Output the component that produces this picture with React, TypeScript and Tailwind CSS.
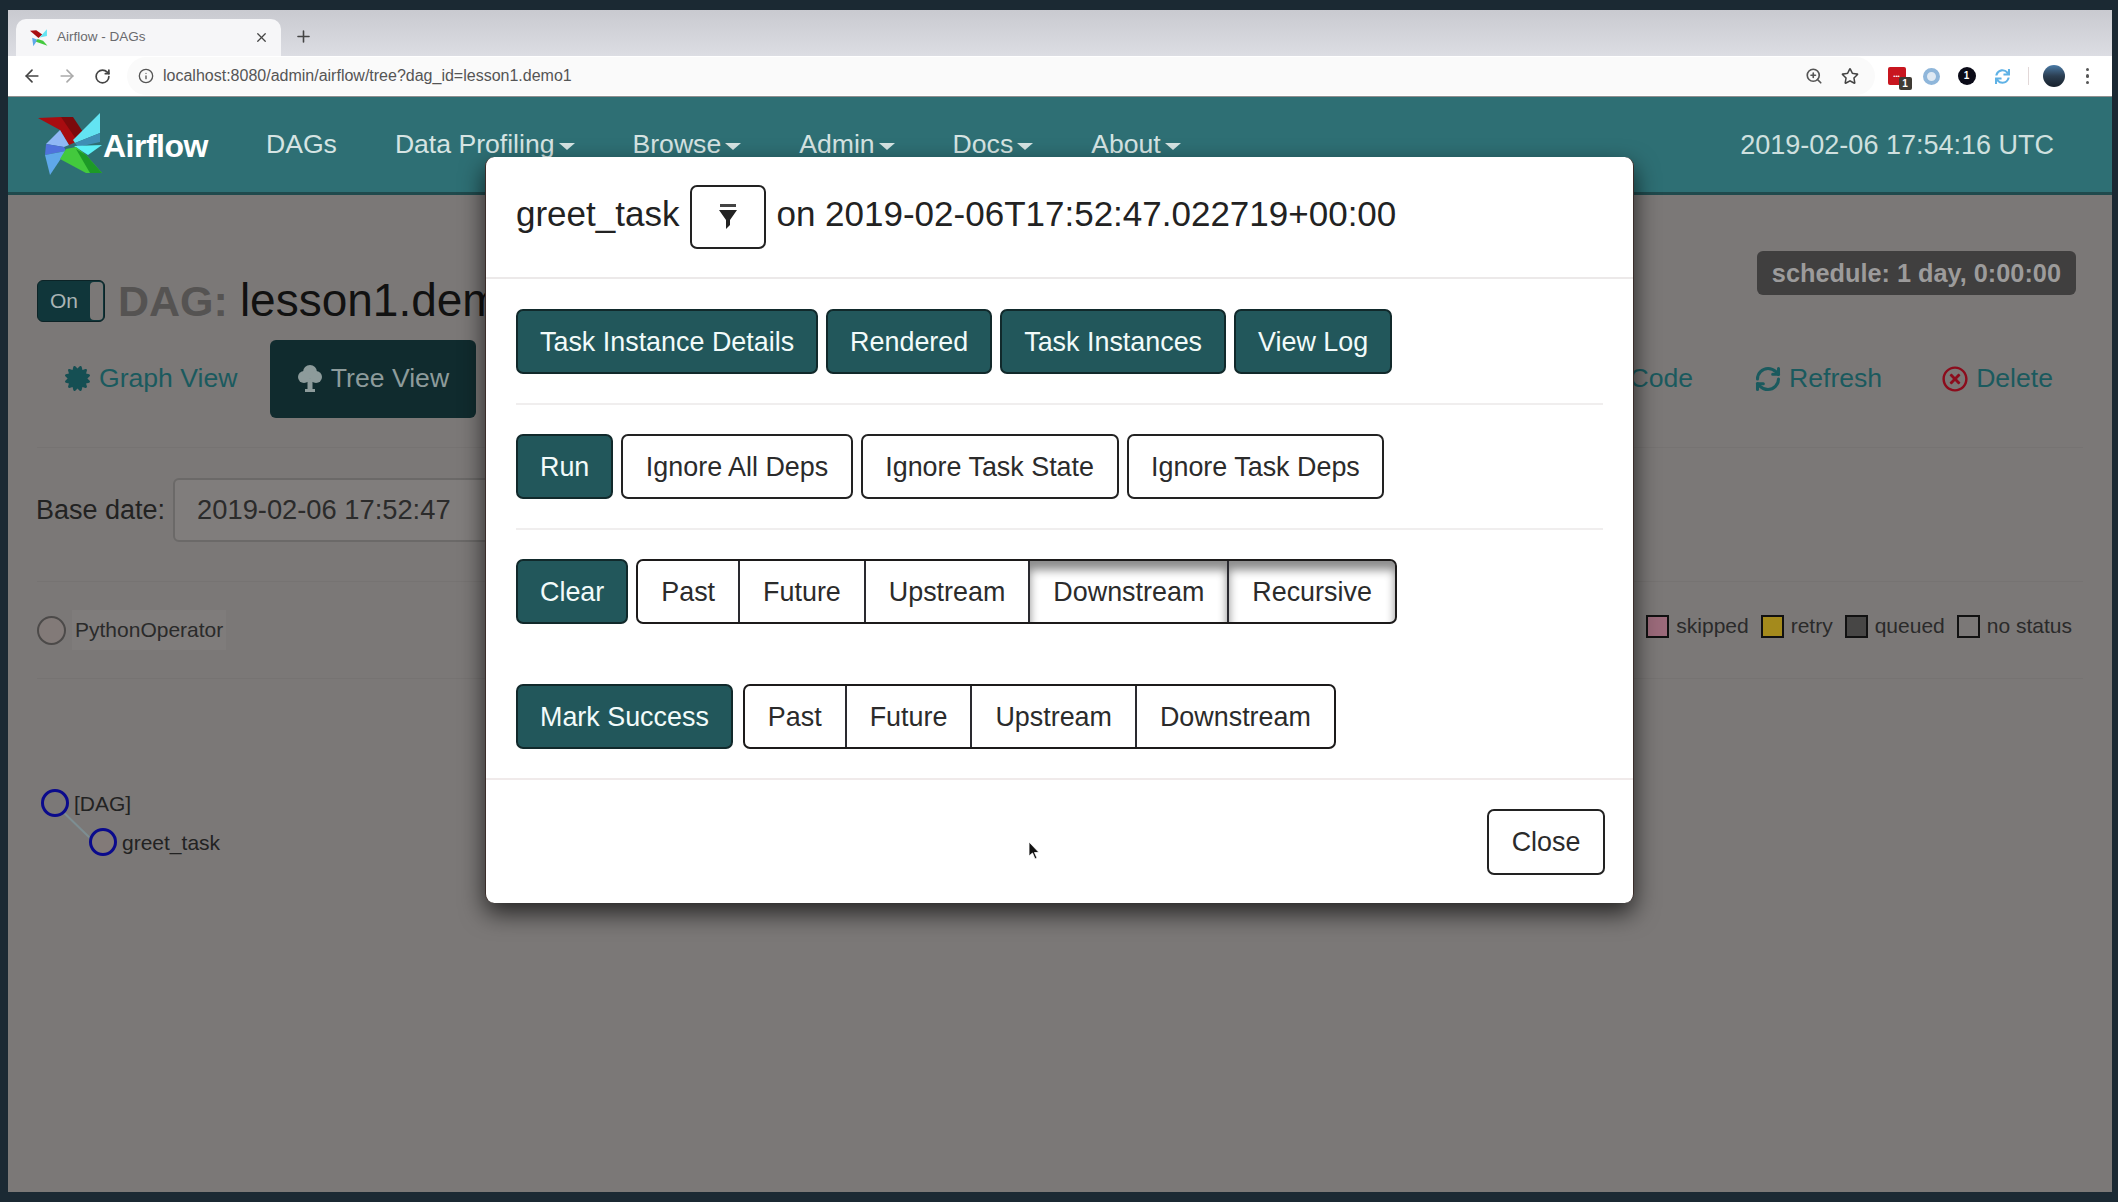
import { FaCertificate, FaRegTimesCircle, FaSync, FaRegStar } from 'react-icons/fa';
import { ArrowLeft, ArrowRight, RotateCw, RefreshCw, Info, ZoomIn, X, Plus } from 'lucide-react';

const font = "font-['Liberation_Sans',Arial,sans-serif]";

function Logo() {
  return (
    <svg width="66" height="64" viewBox="0 0 66 64" className="shrink-0">
      <polygon points="0,5 23,4 45,19 45,26 31,32 22,17" fill="#a80c10" />
      <polygon points="23,4 35,4 45,19 38,26" fill="#7c0a0c" />
      <polygon points="62,0 62,20 37,30 35,27" fill="#63e4f2" />
      <polygon points="62,20 62,29 40,34 37,30" fill="#3f8fb5" />
      <polygon points="36,33 64,32 50,42" fill="#5cf0f7" />
      <polygon points="22,17 31,32 26,34 8,31" fill="#8fb8f5" />
      <polygon points="8,31 26,34 28,38 7,42" fill="#4f72dc" />
      <polygon points="7,42 28,38 12,62" fill="#5fa8ea" />
      <polygon points="28,36 38,34 48,42 64,60 48,60 22,46" fill="#43c93d" />
      <polygon points="38,36 48,42 64,60 52,60" fill="#1d9a27" />
    </svg>
  );
}

function FilterIcon() {
  return (
    <svg width="22" height="26" viewBox="0 0 22 26">
      <rect x="3" y="0" width="16" height="3" fill="#444" />
      <path d="M2 6h18l-7 10v5l-4 4V16z" fill="#222" />
    </svg>
  );
}

function TreeIcon() {
  return (
    <svg width="24" height="28" viewBox="0 0 24 28" fill="#8d9b9b">
      <circle cx="12" cy="7" r="7" />
      <circle cx="6" cy="12" r="6" />
      <circle cx="18" cy="12" r="6" />
      <rect x="9.5" y="14" width="5" height="11" />
      <rect x="7" y="24" width="10" height="3" />
    </svg>
  );
}

function TealButton({ label }: { label: string }) {
  return (
    <button className="h-[65px] pt-[2px] px-[22px] rounded-[7px] border-2 border-[#11292b] bg-[#22575b] text-[#f2fbfa] text-[26.9px]">
      {label}
    </button>
  );
}

function WhiteButton({ label }: { label: string }) {
  return (
    <button className="h-[65px] pt-[2px] px-[22.5px] rounded-[7px] border-2 border-[#222] bg-white text-[#2b2b2b] text-[26.9px]">
      {label}
    </button>
  );
}

function Group({ items, pressed = [] }: { items: string[]; pressed?: string[] }) {
  return (
    <div className="flex h-[65px] rounded-[7px] border-2 border-[#1c1a1a] overflow-hidden bg-white">
      {items.map((item, i) => (
        <button
          key={item}
          className={`pt-[2px] px-[23px] text-[26.9px] text-[#2b2b2b] ${i > 0 ? 'border-l-2 border-[#2a2a30]' : ''} ${
            pressed.includes(item) ? 'shadow-[inset_0_9px_10px_rgba(0,0,0,0.45)]' : ''
          }`}
        >
          {item}
        </button>
      ))}
    </div>
  );
}

function Modal() {
  return (
    <div className="absolute left-[477px] top-[-38px] w-[1149px] h-[746px] flex flex-col rounded-[9px] bg-white text-[#222] shadow-[0_10px_24px_rgba(0,0,0,0.7)] border-l border-r border-[#3a2d2a]">
      <div className="h-[122px] pt-[28px] pl-[30px] border-b-2 border-[#ece9e9] flex items-start gap-[10px] text-[35px]">
        <span className="h-[64px] leading-[58px]">greet_task</span>
        <button className="ml-[1px] w-[76px] h-[64px] rounded-[7px] border-2 border-[#222] flex items-center justify-center">
          <FilterIcon />
        </button>
        <span className="h-[64px] leading-[58px]">on 2019-02-06T17:52:47.022719+00:00</span>
      </div>
      <div className="flex-1 px-[30px] pt-[30px]">
        <div className="flex gap-[8px]">
          <TealButton label="Task Instance Details" />
          <TealButton label="Rendered" />
          <TealButton label="Task Instances" />
          <TealButton label="View Log" />
        </div>
        <div className="mt-[29px] mb-[29px] h-[2px] bg-[#f0eeee]" />
        <div className="flex gap-[8px]">
          <TealButton label="Run" />
          <WhiteButton label="Ignore All Deps" />
          <WhiteButton label="Ignore Task State" />
          <WhiteButton label="Ignore Task Deps" />
        </div>
        <div className="mt-[29px] mb-[29px] h-[2px] bg-[#f0eeee]" />
        <div className="flex gap-[8px]">
          <TealButton label="Clear" />
          <Group items={['Past', 'Future', 'Upstream', 'Downstream', 'Recursive']} pressed={['Downstream', 'Recursive']} />
        </div>
        <div className="flex gap-[10px] mt-[60px]">
          <TealButton label="Mark Success" />
          <Group items={['Past', 'Future', 'Upstream', 'Downstream']} />
        </div>
      </div>
      <div className="relative h-[125px] border-t-2 border-[#f0eaea] pt-[29px] pr-[28px] flex justify-end">
        <button className="h-[66px] w-[118px] rounded-[7px] border-2 border-[#222] text-[26.9px] text-[#2b2b2b]">Close</button>
        <svg width="14" height="20" viewBox="0 0 14 20" className="absolute left-[541px] top-[61px]">
          <path d="M2 1v14l3.5-3 2.5 6 2-1-2.5-5.5H12z" fill="#111" stroke="#fff" strokeWidth="0.8" />
        </svg>
      </div>
    </div>
  );
}

function Legend({ color, label }: { color: string; label: string }) {
  return (
    <div className="flex items-center gap-[7px]">
      <span className={`w-[23px] h-[23px] border-2 border-[#111] ${color}`} />
      <span className="text-[21px] text-[#2a2a2a]">{label}</span>
    </div>
  );
}

function NavItem({ label, caret = true }: { label: string; caret?: boolean }) {
  return (
    <span className="flex items-center gap-[4px] text-[26.6px] text-[#d6e4e3]">
      {label}
      {caret && <span className="mt-[3px] border-x-[8px] border-t-[7px] border-x-transparent border-t-[#d6e4e3]" />}
    </span>
  );
}

export default function App() {
  return (
    <div className={`${font} w-[2118px] h-[1202px] overflow-hidden bg-[#1b2933] pt-[10px] pl-[8px] pr-[6px] pb-[10px] flex flex-col`}>
      {/* browser tabs */}
      <div className="h-[46px] shrink-0 bg-gradient-to-b from-[#c9cad0] to-[#dcdde3] pl-[8px] flex items-end">
        <div className="w-[265px] h-[37px] rounded-t-[10px] bg-[#f6f6f8] flex items-center pl-[14px] pr-[12px]">
          <svg width="18" height="18" viewBox="0 0 66 64" className="shrink-0">
            <polygon points="0,5 23,4 45,19 31,32" fill="#a80c10" />
            <polygon points="62,0 62,25 35,30" fill="#63e4f2" />
            <polygon points="8,31 28,38 12,62" fill="#5fa8ea" />
            <polygon points="28,36 48,42 64,60 22,46" fill="#43c93d" />
          </svg>
          <span className="ml-[9px] text-[13.5px] text-[#6a6a6e]">Airflow - DAGs</span>
          <X size={15} className="ml-auto text-[#444]" strokeWidth={2} />
        </div>
        <Plus size={19} className="ml-[13px] mb-[10px] text-[#444]" strokeWidth={2} />
      </div>

      {/* browser toolbar */}
      <div className="h-[41px] shrink-0 bg-white border-b border-[#8f8f8f] flex items-center pl-[14px] pr-[23px]">
        <ArrowLeft size={20} className="text-[#444]" />
        <ArrowRight size={20} className="ml-[15px] text-[#aaa]" />
        <RotateCw size={17} className="ml-[17px] text-[#444]" strokeWidth={2.4} />
        <div className="ml-[16px] flex-1 h-[38px] rounded-full bg-[#fafafa] flex items-center pl-[11px] pr-[16px]">
          <Info size={16} className="text-[#555]" />
          <span className="ml-[9px] text-[16px] text-[#555]">localhost:8080/admin/airflow/tree?dag_id=lesson1.demo1</span>
          <ZoomIn size={18} className="ml-auto text-[#555]" strokeWidth={2.2} />
          <FaRegStar size={18} className="ml-[18px] text-[#444]" />
        </div>
        <div className="ml-[13px] relative w-[18px] h-[18px] bg-[#c8161f] rounded-[2px] flex items-center justify-center">
          <span className="text-[6px] text-white">•••</span>
          <span className="absolute left-[11px] top-[10px] w-[13px] h-[13px] rounded-[2px] bg-[#3f3a33] text-[10px] leading-[13px] text-center text-white font-bold">1</span>
        </div>
        <div className="ml-[17px] w-[17px] h-[17px] rounded-full border-[4px] border-[#8fb6da] bg-[#dfe9f3]" />
        <div className="ml-[18px] w-[18px] h-[18px] rounded-full bg-[#0b0b18] text-white text-[10px] font-bold leading-[18px] text-center">1</div>
        <FaSync size={15} className="ml-[19px] text-[#5fb2e6]" />
        <div className="ml-[18px] w-[1px] h-[18px] bg-[#e2d8d8]" />
        <div className="ml-[14px] w-[22px] h-[22px] rounded-full bg-gradient-to-b from-[#4a7ba8] via-[#2c3f52] to-[#16202b]" />
        <div className="ml-[21px] flex flex-col gap-[3px]">
          <span className="w-[3.5px] h-[3.5px] rounded-full bg-[#555]" />
          <span className="w-[3.5px] h-[3.5px] rounded-full bg-[#555]" />
          <span className="w-[3.5px] h-[3.5px] rounded-full bg-[#555]" />
        </div>
      </div>

      {/* airflow navbar */}
      <div className="h-[95px] shrink-0 bg-[#2e6f74] border-b-[3px] border-[#1f4a4d] flex items-center pl-[30px] pr-[58px] box-content">
        <Logo />
        <span className="ml-[-1px] mt-[2px] text-[32px] font-bold text-white tracking-[-0.5px]">Airflow</span>
        <div className="ml-[58px] flex items-center gap-[58px] mt-[1px]">
          <NavItem label="DAGs" caret={false} />
          <NavItem label="Data Profiling" />
          <NavItem label="Browse" />
          <NavItem label="Admin" />
          <NavItem label="Docs" />
          <NavItem label="About" />
        </div>
        <span className="ml-auto mt-[1px] text-[27px] text-[#cfe0df]">2019-02-06 17:54:16 UTC</span>
      </div>

      {/* page behind the dialog */}
      <div className="relative flex-1 bg-[#7b7877] px-[29px]">
        <div className="flex items-start justify-between pt-[56px] pr-[7px]">
          <div className="flex items-center h-[44px] mt-[27px]">
            <div className="mt-[2px] w-[68px] h-[42px] rounded-[6px] border border-[#0c2326] bg-[#10363a] flex items-center pl-[12px] pr-[1px] justify-between">
              <span className="text-[21px] text-[#a9b4b4]">On</span>
              <span className="w-[13px] h-[38px] rounded-[4px] bg-[#7b7877]" />
            </div>
            <h1 className="ml-[13px] text-[46px] leading-none whitespace-nowrap text-[#111]">
              <span className="text-[43px] font-bold text-[#555352]">DAG:</span>
              <span className="ml-[12px]">lesson1.demo1</span>
            </h1>
          </div>
          <span className="h-[44px] leading-[44px] px-[15px] rounded-[6px] bg-[#403f3f] text-[25.3px] font-bold text-[#9c9b9b]">
            schedule: 1 day, 0:00:00
          </span>
        </div>

        <div className="mt-[18px] h-[78px] flex items-center justify-between text-[26.6px] text-[#1a5a5e]">
          <div className="flex items-center">
            <span className="ml-[28px] flex items-center gap-[9px]">
              <FaCertificate size={25} className="text-[#154f53]" />
              Graph View
            </span>
            <span className="ml-[33px] w-[206px] h-[78px] rounded-[6px] bg-[#102b2e] text-[#8d9b9b] flex items-center justify-center gap-[9px]">
              <TreeIcon />
              Tree View
            </span>
          </div>
          <div className="flex items-center pr-[30px]">
            <span>Code</span>
            <span className="ml-[61px] flex items-center gap-[7px]">
              <RefreshCw size={28} strokeWidth={2.6} className="text-[#1a5a5e]" />
              Refresh
            </span>
            <span className="ml-[60px] flex items-center gap-[8px]">
              <FaRegTimesCircle size={26} className="text-[#8c0c1c]" />
              Delete
            </span>
          </div>
        </div>

        <div className="mt-[29px] h-[1px] bg-[#767372]" />

        <div className="mt-[30px] flex items-center">
          <span className="text-[27px] text-[#222] ml-[-1px]">Base date:</span>
          <div className="ml-[8px] w-[420px] h-[64px] rounded-[6px] border-2 border-[#6b6968] bg-[#807d7c] pl-[22px] flex items-center text-[27.3px] text-[#2b2b2b]">
            2019-02-06 17:52:47
          </div>
        </div>

        <div className="mt-[39px] h-[1px] bg-[#767372]" />

        <div className="h-[96px] flex items-center justify-between pr-[11px]">
          <div className="flex items-center">
            <span className="w-[29px] h-[29px] rounded-full border-2 border-[#4c4a49] bg-[#827a78]" />
            <span className="ml-[6px] px-[3px] py-[4px] bg-[#7f7c7b] text-[21px] text-[#2a2a2a]">PythonOperator</span>
          </div>
          <div className="flex items-center gap-[12px] mt-[-8px]">
            <Legend color="bg-[#9b6a7a]" label="skipped" />
            <Legend color="bg-[#a48a1c]" label="retry" />
            <Legend color="bg-[#474645]" label="queued" />
            <Legend color="bg-[#7b7877]" label="no status" />
          </div>
        </div>

        <div className="h-[1px] bg-[#767372]" />

        <div className="relative h-[90px] mt-[110px] ml-[4px] text-[21px] leading-none text-[#222]">
          <svg width="60" height="60" className="absolute left-0 top-0">
            <line x1="15" y1="16" x2="50" y2="50" stroke="#7d8e92" strokeWidth="2" />
          </svg>
          <div className="flex items-center">
            <span className="w-[28px] h-[28px] rounded-full border-[3px] border-[#0a0a8c] bg-[#7b7877] z-10" />
            <span className="ml-[5px]">[DAG]</span>
          </div>
          <div className="flex items-center ml-[48px] mt-[11px]">
            <span className="w-[28px] h-[28px] rounded-full border-[3px] border-[#0a0a8c] bg-[#827a78] z-10" />
            <span className="ml-[5px]">greet_task</span>
          </div>
        </div>

        <Modal />
      </div>
    </div>
  );
}
